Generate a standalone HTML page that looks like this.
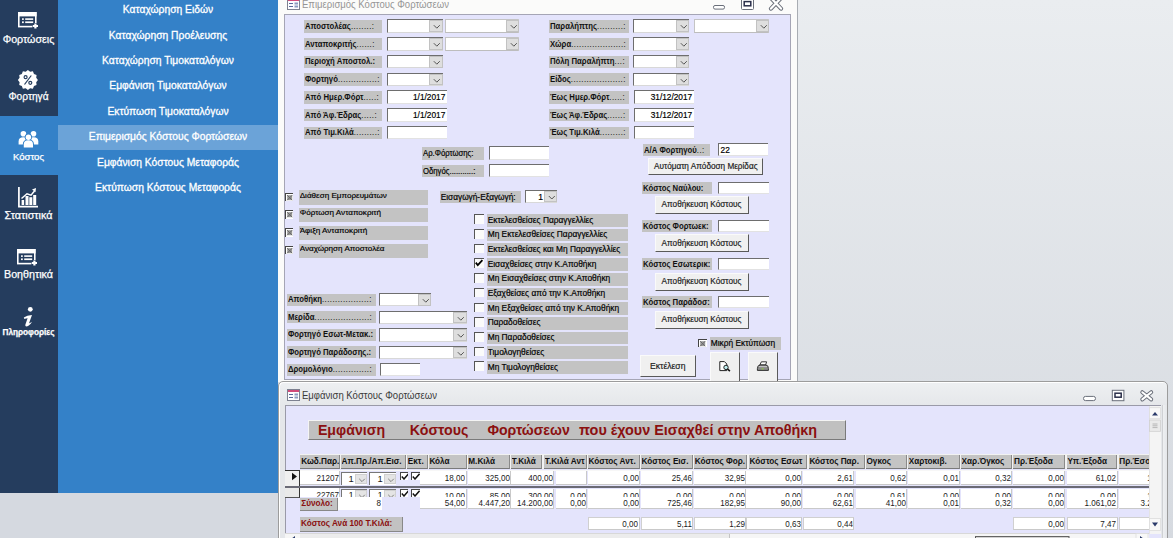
<!DOCTYPE html><html><head><meta charset="utf-8"><style>
*{margin:0;padding:0;box-sizing:border-box}
html,body{width:1173px;height:538px;overflow:hidden}
body{position:relative;font-family:"Liberation Sans",sans-serif;background:linear-gradient(#eaedf0,#d6dae0)}
div{position:absolute;white-space:nowrap;overflow:visible}
svg{position:absolute;left:0;top:0;overflow:visible}
</style></head><body><div style="left:0px;top:0px;width:58px;height:493px;background:#253d5e"></div>
<div style="left:0px;top:116px;width:58px;height:59px;background:#3481c8"></div>
<div style="left:58px;top:0px;width:220px;height:493px;background:#3481c8"></div>
<div style="left:0px;top:493px;width:278px;height:45px;background:#d5d9e0"></div>
<div style="left:58px;top:125px;width:220px;height:25px;background:#6ba3d8"></div>
<div style="top:0.23px;height:20px;font-size:10.3px;line-height:20px;color:#fff;left:58.0px;width:220px;text-align:center;-webkit-text-stroke:0.3px #fff;">Καταχώρηση Ειδών</div>
<div style="top:25.63px;height:20px;font-size:10.3px;line-height:20px;color:#fff;left:58.0px;width:220px;text-align:center;-webkit-text-stroke:0.3px #fff;">Καταχώρηση Προέλευσης</div>
<div style="top:51.03px;height:20px;font-size:10.3px;line-height:20px;color:#fff;left:58.0px;width:220px;text-align:center;-webkit-text-stroke:0.3px #fff;">Καταχώρηση Τιμοκαταλόγων</div>
<div style="top:76.43px;height:20px;font-size:10.3px;line-height:20px;color:#fff;left:58.0px;width:220px;text-align:center;-webkit-text-stroke:0.3px #fff;">Εμφάνιση Τιμοκαταλόγων</div>
<div style="top:101.83px;height:20px;font-size:10.3px;line-height:20px;color:#fff;left:58.0px;width:220px;text-align:center;-webkit-text-stroke:0.3px #fff;">Εκτύπωση Τιμοκαταλόγων</div>
<div style="top:127.23px;height:20px;font-size:10.3px;line-height:20px;color:#fff;left:58.0px;width:220px;text-align:center;-webkit-text-stroke:0.3px #fff;">Επιμερισμός Κόστους Φορτώσεων</div>
<div style="top:152.63px;height:20px;font-size:10.3px;line-height:20px;color:#fff;left:58.0px;width:220px;text-align:center;-webkit-text-stroke:0.3px #fff;">Εμφάνιση Κόστους Μεταφοράς</div>
<div style="top:178.03px;height:20px;font-size:10.3px;line-height:20px;color:#fff;left:58.0px;width:220px;text-align:center;-webkit-text-stroke:0.3px #fff;">Εκτύπωση Κόστους Μεταφοράς</div>
<div style="top:28.89px;height:20px;font-size:10.7px;line-height:20px;color:#fff;left:-0.5px;width:58px;text-align:center;-webkit-text-stroke:0.25px #fff;">Φορτώσεις</div>
<div style="top:87.07px;height:20px;font-size:10.2px;line-height:20px;color:#fff;left:-0.5px;width:58px;text-align:center;-webkit-text-stroke:0.25px #fff;">Φορτηγά</div>
<div style="top:146.67px;height:20px;font-size:9.6px;line-height:20px;color:#fff;left:-0.5px;width:58px;text-align:center;-webkit-text-stroke:0.25px #fff;">Κόστος</div>
<div style="top:204.96px;height:20px;font-size:10.8px;line-height:20px;color:#fff;left:-0.5px;width:58px;text-align:center;-webkit-text-stroke:0.25px #fff;">Στατιστικά</div>
<div style="top:264.09px;height:20px;font-size:10.7px;line-height:20px;color:#fff;left:-0.5px;width:58px;text-align:center;-webkit-text-stroke:0.25px #fff;">Βοηθητικά</div>
<div style="top:323.46px;height:20px;font-size:8.2px;line-height:20px;color:#fff;font-weight:bold;left:-0.5px;width:58px;text-align:center;-webkit-text-stroke:0.25px #fff;">Πληροφορίες</div>
<svg style="left:17.8px;top:12px" width="24" height="20" viewBox="0 0 24 20">
<rect x="0.8" y="0.8" width="17" height="13.8" fill="none" stroke="#fff" stroke-width="1.6"/>
<rect x="0" y="0" width="18.6" height="4.4" fill="#fff"/>
<rect x="4" y="6.3" width="1.8" height="1.6" fill="#fff"/><rect x="7.2" y="6.3" width="8" height="1.6" fill="#fff"/>
<rect x="4" y="9.4" width="1.8" height="1.7" fill="#fff"/><rect x="7.2" y="9.4" width="8" height="1.7" fill="#fff"/>
<path d="M17.4 11 v6 M14.4 14 h6" stroke="#253d5e" stroke-width="4.6"/>
<path d="M17.4 11.4 v5.2 M14.8 14 h5.2" stroke="#fff" stroke-width="2.2"/>
</svg>
<svg style="left:17.4px;top:248.5px" width="24" height="20" viewBox="0 0 24 20">
<rect x="0.8" y="0.8" width="17" height="13.8" fill="none" stroke="#fff" stroke-width="1.6"/>
<rect x="0" y="0" width="18.6" height="4.4" fill="#fff"/>
<rect x="4" y="6.3" width="1.8" height="1.6" fill="#fff"/><rect x="7.2" y="6.3" width="8" height="1.6" fill="#fff"/>
<rect x="4" y="9.4" width="1.8" height="1.7" fill="#fff"/><rect x="7.2" y="9.4" width="8" height="1.7" fill="#fff"/>
<path d="M17.4 11 v6 M14.4 14 h6" stroke="#253d5e" stroke-width="4.6"/>
<path d="M17.4 11.4 v5.2 M14.8 14 h5.2" stroke="#fff" stroke-width="2.2"/>
</svg>
<svg style="left:0;top:0" width="58" height="100"><polygon points="27.90,90.00 30.13,88.31 32.90,88.66 33.98,86.08 36.56,85.00 36.21,82.23 37.90,80.00 36.21,77.77 36.56,75.00 33.98,73.92 32.90,71.34 30.13,71.69 27.90,70.00 25.67,71.69 22.90,71.34 21.82,73.92 19.24,75.00 19.59,77.77 17.90,80.00 19.59,82.23 19.24,85.00 21.82,86.08 22.90,88.66 25.67,88.31" fill="#fff"/>
<circle cx="25.6" cy="77.2" r="1.5" fill="none" stroke="#253d5e" stroke-width="1.2"/>
<circle cx="30.3" cy="82.8" r="1.5" fill="none" stroke="#253d5e" stroke-width="1.2"/>
<path d="M24.5 84.5 L31.3 75.5" stroke="#253d5e" stroke-width="1.2"/></svg>
<svg style="left:0;top:0" width="58" height="160">
<circle cx="23.4" cy="133.8" r="2.8" fill="#fff"/><circle cx="33.5" cy="133.8" r="2.8" fill="#fff"/>
<path d="M18.6 144.6 v-3.2 q0-4.2 4.8-4.2 q4.8 0 4.8 4.2 v3.2z" fill="#fff"/>
<path d="M28.7 144.6 v-3.2 q0-4.2 4.8-4.2 q4.8 0 4.8 4.2 v3.2z" fill="#fff"/>
<circle cx="28.4" cy="137.2" r="3.6" fill="#3481c8"/>
<path d="M22.8 148.4 v-4 q0-5 5.6-5 q5.6 0 5.6 5 v4z" fill="#3481c8"/>
<circle cx="28.4" cy="137.2" r="2.7" fill="#fff"/>
<path d="M23.8 147.6 v-3.4 q0-4 4.6-4 q4.6 0 4.6 4 v3.4z" fill="#fff"/>
</svg>
<svg style="left:0;top:0" width="58" height="220">
<path d="M18.9 187 V206.7 H38" fill="none" stroke="#fff" stroke-width="1.7"/>
<rect x="21.6" y="200" width="2.5" height="5" fill="#fff"/>
<rect x="25.5" y="196" width="3" height="9" fill="#fff"/>
<rect x="29.3" y="197.2" width="3" height="7.8" fill="#fff"/>
<rect x="33.2" y="195" width="3" height="10" fill="#fff"/>
<path d="M21.5 198.5 L27 193.8 L31 195.2 L34.5 191" fill="none" stroke="#fff" stroke-width="1.5"/>
<path d="M32 189.5 L36 188 L35.5 192.3z" fill="#fff"/>
</svg>
<svg style="left:0;top:0" width="58" height="340">
<circle cx="30.3" cy="309.3" r="2.4" fill="#fff"/>
<path d="M23.8 317.6 Q27 315.3 32 315.1 L29.3 322.6 Q29.1 323.5 30 323 L32 321.8 Q29.5 326.2 26.6 326.4 Q24.8 326.4 25.4 324.4 L27.6 318.2 Q26 318.2 24.4 318.9z" fill="#fff"/>
</svg>
<div style="left:278px;top:0px;width:520px;height:381.5px;background:#fbfbfa;border-right:1.4px solid #a9adb3"></div>
<div style="left:284px;top:14px;width:507px;height:366px;background:#e4e4fc;border:1px solid #a5a5b5"></div>
<div style="top:-4.96px;height:20px;font-size:10.0px;line-height:20px;color:#959595;left:301.5px;transform:scaleX(0.955);transform-origin:left;">Επιμερισμός Κόστους Φορτώσεων</div>
<svg style="left:286.5px;top:-2.5px" width="13" height="12">
<rect x="0.5" y="0.5" width="12" height="11" fill="#fdfdff" stroke="#7d8190"/>
<rect x="1" y="1" width="11" height="2" fill="#d04a7a"/>
<path d="M2 5.5 h4 M2 8.5 h4" stroke="#5a6a9a" stroke-width="1.2"/>
<rect x="7.5" y="4.5" width="3.5" height="2" fill="#8a9ac0"/><rect x="7.5" y="7.5" width="3.5" height="2" fill="#8a9ac0"/>
</svg>
<svg style="left:0;top:0" width="800" height="14">
<rect x="713.5" y="5.5" width="11" height="3.6" rx="1.5" fill="#fff" stroke="#6a6f7a" stroke-width="1"/>
<rect x="741.5" y="-2" width="12" height="11.5" rx="1" fill="#fff" stroke="#6a6f7a" stroke-width="1"/>
<rect x="744.2" y="1.6" width="6.6" height="4.2" fill="none" stroke="#2a2f4a" stroke-width="1.5"/>
<path d="M771 -2 L781 8.6 M781 -2 L771 8.6" stroke="#6a6f7a" stroke-width="4.2" stroke-linecap="round"/>
<path d="M771 -2 L781 8.6 M781 -2 L771 8.6" stroke="#fff" stroke-width="2.2" stroke-linecap="round"/>
</svg>
<div style="left:304.3px;top:20.0px;width:77.4px;height:12.6px;background:#c3c3c3"></div>
<div style="top:15.88px;height:20px;font-size:9.0px;line-height:20px;color:#111;font-weight:bold;left:305.3px;transform:scaleX(0.86);transform-origin:left;width:88.3px;overflow:hidden;">Αποστολέας<span style="font-weight:normal;letter-spacing:0.55px">........</span><span style="font-weight:normal">:</span></div>
<div style="left:549px;top:20.0px;width:80px;height:12.6px;background:#c3c3c3"></div>
<div style="top:15.88px;height:20px;font-size:9.0px;line-height:20px;color:#111;font-weight:bold;left:550px;transform:scaleX(0.86);transform-origin:left;width:91.3px;overflow:hidden;">Παραλήπτης<span style="font-weight:normal;letter-spacing:0.55px">..........</span><span style="font-weight:normal">:</span></div>
<div style="left:386.7px;top:19.4px;width:56px;height:13.4px;background:#fff;border-top:1.5px solid #6e6e6e;border-left:1.5px solid #6e6e6e;border-bottom:1px solid #d8d8d8"></div>
<div style="left:429.2px;top:20.4px;width:13.5px;height:11.9px;background:#dedede;border:1px solid #c2c2c2"><svg width="13.5" height="11.9"><path d="M3.8 4.2 l3 3 l3 -3" fill="none" stroke="#555" stroke-width="1"/></svg></div>
<div style="left:633.4px;top:19.4px;width:56px;height:13.4px;background:#fff;border-top:1.5px solid #6e6e6e;border-left:1.5px solid #6e6e6e;border-bottom:1px solid #d8d8d8"></div>
<div style="left:675.9px;top:20.4px;width:13.5px;height:11.9px;background:#dedede;border:1px solid #c2c2c2"><svg width="13.5" height="11.9"><path d="M3.8 4.2 l3 3 l3 -3" fill="none" stroke="#555" stroke-width="1"/></svg></div>
<div style="left:445px;top:19.4px;width:74px;height:13.4px;background:#fff;border-top:1.2px solid #c4c4c4;border-left:1.2px solid #c4c4c4;border-bottom:1.4px solid #bdbdbd;border-right:1px solid #d0d0d0"></div>
<div style="left:505.5px;top:20.4px;width:13.5px;height:11.9px;background:#dedede;border:1px solid #c2c2c2"><svg width="13.5" height="11.9"><path d="M3.8 4.2 l3 3 l3 -3" fill="none" stroke="#555" stroke-width="1"/></svg></div>
<div style="left:304.3px;top:37.9px;width:77.4px;height:12.6px;background:#c3c3c3"></div>
<div style="top:33.78px;height:20px;font-size:9.0px;line-height:20px;color:#111;font-weight:bold;left:305.3px;transform:scaleX(0.86);transform-origin:left;width:88.3px;overflow:hidden;">Ανταποκριτής<span style="font-weight:normal;letter-spacing:0.55px">......</span><span style="font-weight:normal">:</span></div>
<div style="left:549px;top:37.9px;width:80px;height:12.6px;background:#c3c3c3"></div>
<div style="top:33.78px;height:20px;font-size:9.0px;line-height:20px;color:#111;font-weight:bold;left:550px;transform:scaleX(0.86);transform-origin:left;width:91.3px;overflow:hidden;">Χώρα<span style="font-weight:normal;letter-spacing:0.55px">....................</span><span style="font-weight:normal">:</span></div>
<div style="left:386.7px;top:37.3px;width:56px;height:13.4px;background:#fff;border-top:1.5px solid #6e6e6e;border-left:1.5px solid #6e6e6e;border-bottom:1px solid #d8d8d8"></div>
<div style="left:429.2px;top:38.3px;width:13.5px;height:11.9px;background:#dedede;border:1px solid #c2c2c2"><svg width="13.5" height="11.9"><path d="M3.8 4.2 l3 3 l3 -3" fill="none" stroke="#555" stroke-width="1"/></svg></div>
<div style="left:633.4px;top:37.3px;width:56px;height:13.4px;background:#fff;border-top:1.5px solid #6e6e6e;border-left:1.5px solid #6e6e6e;border-bottom:1px solid #d8d8d8"></div>
<div style="left:675.9px;top:38.3px;width:13.5px;height:11.9px;background:#dedede;border:1px solid #c2c2c2"><svg width="13.5" height="11.9"><path d="M3.8 4.2 l3 3 l3 -3" fill="none" stroke="#555" stroke-width="1"/></svg></div>
<div style="left:445px;top:37.3px;width:74px;height:13.4px;background:#fff;border-top:1.2px solid #c4c4c4;border-left:1.2px solid #c4c4c4;border-bottom:1.4px solid #bdbdbd;border-right:1px solid #d0d0d0"></div>
<div style="left:505.5px;top:38.3px;width:13.5px;height:11.9px;background:#dedede;border:1px solid #c2c2c2"><svg width="13.5" height="11.9"><path d="M3.8 4.2 l3 3 l3 -3" fill="none" stroke="#555" stroke-width="1"/></svg></div>
<div style="left:304.3px;top:55.6px;width:77.4px;height:12.6px;background:#c3c3c3"></div>
<div style="top:51.48px;height:20px;font-size:9.0px;line-height:20px;color:#111;font-weight:bold;left:305.3px;transform:scaleX(0.86);transform-origin:left;width:88.3px;overflow:hidden;">Περιοχή Αποστολ.:</div>
<div style="left:549px;top:55.6px;width:80px;height:12.6px;background:#c3c3c3"></div>
<div style="top:51.48px;height:20px;font-size:9.0px;line-height:20px;color:#111;font-weight:bold;left:550px;transform:scaleX(0.86);transform-origin:left;width:91.3px;overflow:hidden;">Πόλη Παραλήπτη<span style="font-weight:normal;letter-spacing:0.55px">...</span><span style="font-weight:normal">:</span></div>
<div style="left:386.7px;top:55.0px;width:56px;height:13.4px;background:#fff;border-top:1.5px solid #6e6e6e;border-left:1.5px solid #6e6e6e;border-bottom:1px solid #d8d8d8"></div>
<div style="left:429.2px;top:56.0px;width:13.5px;height:11.9px;background:#dedede;border:1px solid #c2c2c2"><svg width="13.5" height="11.9"><path d="M3.8 4.2 l3 3 l3 -3" fill="none" stroke="#555" stroke-width="1"/></svg></div>
<div style="left:633.4px;top:55.0px;width:56px;height:13.4px;background:#fff;border-top:1.5px solid #6e6e6e;border-left:1.5px solid #6e6e6e;border-bottom:1px solid #d8d8d8"></div>
<div style="left:675.9px;top:56.0px;width:13.5px;height:11.9px;background:#dedede;border:1px solid #c2c2c2"><svg width="13.5" height="11.9"><path d="M3.8 4.2 l3 3 l3 -3" fill="none" stroke="#555" stroke-width="1"/></svg></div>
<div style="left:304.3px;top:73.19999999999999px;width:77.4px;height:12.6px;background:#c3c3c3"></div>
<div style="top:69.08px;height:20px;font-size:9.0px;line-height:20px;color:#111;font-weight:bold;left:305.3px;transform:scaleX(0.86);transform-origin:left;width:88.3px;overflow:hidden;">Φορτηγό<span style="font-weight:normal;letter-spacing:0.55px">...............</span><span style="font-weight:normal">:</span></div>
<div style="left:549px;top:73.19999999999999px;width:80px;height:12.6px;background:#c3c3c3"></div>
<div style="top:69.08px;height:20px;font-size:9.0px;line-height:20px;color:#111;font-weight:bold;left:550px;transform:scaleX(0.86);transform-origin:left;width:91.3px;overflow:hidden;">Είδος<span style="font-weight:normal;letter-spacing:0.55px">....................</span><span style="font-weight:normal">:</span></div>
<div style="left:386.7px;top:72.6px;width:56px;height:13.4px;background:#fff;border-top:1.5px solid #6e6e6e;border-left:1.5px solid #6e6e6e;border-bottom:1px solid #d8d8d8"></div>
<div style="left:429.2px;top:73.6px;width:13.5px;height:11.9px;background:#dedede;border:1px solid #c2c2c2"><svg width="13.5" height="11.9"><path d="M3.8 4.2 l3 3 l3 -3" fill="none" stroke="#555" stroke-width="1"/></svg></div>
<div style="left:633.4px;top:72.6px;width:56px;height:13.4px;background:#fff;border-top:1.5px solid #6e6e6e;border-left:1.5px solid #6e6e6e;border-bottom:1px solid #d8d8d8"></div>
<div style="left:675.9px;top:73.6px;width:13.5px;height:11.9px;background:#dedede;border:1px solid #c2c2c2"><svg width="13.5" height="11.9"><path d="M3.8 4.2 l3 3 l3 -3" fill="none" stroke="#555" stroke-width="1"/></svg></div>
<div style="left:304.3px;top:91.0px;width:77.4px;height:12.6px;background:#c3c3c3"></div>
<div style="top:86.88px;height:20px;font-size:9.0px;line-height:20px;color:#111;font-weight:bold;left:305.3px;transform:scaleX(0.86);transform-origin:left;width:88.3px;overflow:hidden;">Από Ημερ.Φόρτ<span style="font-weight:normal;letter-spacing:0.55px">.....</span><span style="font-weight:normal">:</span></div>
<div style="left:549px;top:91.0px;width:80px;height:12.6px;background:#c3c3c3"></div>
<div style="top:86.88px;height:20px;font-size:9.0px;line-height:20px;color:#111;font-weight:bold;left:550px;transform:scaleX(0.86);transform-origin:left;width:91.3px;overflow:hidden;">Έως Ημερ.Φόρτ<span style="font-weight:normal;letter-spacing:0.55px">.....</span><span style="font-weight:normal">:</span></div>
<div style="left:386.6px;top:90.4px;width:60px;height:13.4px;background:#fff;border-top:1.5px solid #6e6e6e;border-left:1.5px solid #6e6e6e;border-bottom:1px solid #e2e2e2"></div>
<div style="top:87.02px;height:20px;font-size:8.3px;line-height:20px;color:#000;-webkit-text-stroke:0.18px #000;left:385.3px;width:60px;text-align:right;">1/1/2017</div>
<div style="left:633.5px;top:90.4px;width:60px;height:13.4px;background:#fff;border-top:1.5px solid #6e6e6e;border-left:1.5px solid #6e6e6e;border-bottom:1px solid #e2e2e2"></div>
<div style="top:87.02px;height:20px;font-size:8.3px;line-height:20px;color:#000;-webkit-text-stroke:0.18px #000;left:632.2px;width:60px;text-align:right;">31/12/2017</div>
<div style="left:304.3px;top:108.8px;width:77.4px;height:12.6px;background:#c3c3c3"></div>
<div style="top:104.68px;height:20px;font-size:9.0px;line-height:20px;color:#111;font-weight:bold;left:305.3px;transform:scaleX(0.86);transform-origin:left;width:88.3px;overflow:hidden;">Από Άφ.Έδρας<span style="font-weight:normal;letter-spacing:0.55px">.....</span><span style="font-weight:normal">:</span></div>
<div style="left:549px;top:108.8px;width:80px;height:12.6px;background:#c3c3c3"></div>
<div style="top:104.68px;height:20px;font-size:9.0px;line-height:20px;color:#111;font-weight:bold;left:550px;transform:scaleX(0.86);transform-origin:left;width:91.3px;overflow:hidden;">Έως Άφ.Έδρας<span style="font-weight:normal;letter-spacing:0.55px">......</span><span style="font-weight:normal">:</span></div>
<div style="left:386.6px;top:108.2px;width:60px;height:13.4px;background:#fff;border-top:1.5px solid #6e6e6e;border-left:1.5px solid #6e6e6e;border-bottom:1px solid #e2e2e2"></div>
<div style="top:104.82px;height:20px;font-size:8.3px;line-height:20px;color:#000;-webkit-text-stroke:0.18px #000;left:385.3px;width:60px;text-align:right;">1/1/2017</div>
<div style="left:633.5px;top:108.2px;width:60px;height:13.4px;background:#fff;border-top:1.5px solid #6e6e6e;border-left:1.5px solid #6e6e6e;border-bottom:1px solid #e2e2e2"></div>
<div style="top:104.82px;height:20px;font-size:8.3px;line-height:20px;color:#000;-webkit-text-stroke:0.18px #000;left:632.2px;width:60px;text-align:right;">31/12/2017</div>
<div style="left:304.3px;top:126.6px;width:77.4px;height:12.6px;background:#c3c3c3"></div>
<div style="top:122.48px;height:20px;font-size:9.0px;line-height:20px;color:#111;font-weight:bold;left:305.3px;transform:scaleX(0.86);transform-origin:left;width:88.3px;overflow:hidden;">Από Τιμ.Κιλά<span style="font-weight:normal;letter-spacing:0.55px">.........</span><span style="font-weight:normal">:</span></div>
<div style="left:549px;top:126.6px;width:80px;height:12.6px;background:#c3c3c3"></div>
<div style="top:122.48px;height:20px;font-size:9.0px;line-height:20px;color:#111;font-weight:bold;left:550px;transform:scaleX(0.86);transform-origin:left;width:91.3px;overflow:hidden;">Έως Τιμ.Κιλά<span style="font-weight:normal;letter-spacing:0.55px">.........</span><span style="font-weight:normal">:</span></div>
<div style="left:386.6px;top:126.0px;width:60px;height:13.4px;background:#fff;border-top:1.5px solid #6e6e6e;border-left:1.5px solid #6e6e6e;border-bottom:1px solid #e2e2e2"></div>
<div style="left:633.5px;top:126.0px;width:60px;height:13.4px;background:#fff;border-top:1.5px solid #6e6e6e;border-left:1.5px solid #6e6e6e;border-bottom:1px solid #e2e2e2"></div>
<div style="left:694.3px;top:19.4px;width:75px;height:13.4px;background:#fff;border-top:1.2px solid #c4c4c4;border-left:1.2px solid #c4c4c4;border-bottom:1.4px solid #bdbdbd;border-right:1px solid #d0d0d0"></div>
<div style="left:755.8px;top:20.4px;width:13.5px;height:11.9px;background:#dedede;border:1px solid #c2c2c2"><svg width="13.5" height="11.9"><path d="M3.8 4.2 l3 3 l3 -3" fill="none" stroke="#555" stroke-width="1"/></svg></div>
<div style="left:422px;top:147.1px;width:62px;height:12.5px;background:#c3c3c3"></div>
<div style="top:143.32px;height:20px;font-size:8.6px;line-height:20px;color:#000;-webkit-text-stroke:0.18px #000;left:423px;transform:scaleX(0.9);transform-origin:left;width:67.2px;overflow:hidden;">Αρ.Φόρτωσης:</div>
<div style="left:422px;top:164.7px;width:62px;height:12.3px;background:#c3c3c3"></div>
<div style="top:160.92px;height:20px;font-size:8.6px;line-height:20px;color:#000;-webkit-text-stroke:0.18px #000;left:423px;transform:scaleX(0.9);transform-origin:left;width:67.2px;overflow:hidden;">Οδηγός...........:</div>
<div style="left:489.3px;top:146.3px;width:59.4px;height:13.3px;background:#fff;border-top:1.5px solid #6e6e6e;border-left:1.5px solid #6e6e6e;border-bottom:1px solid #e2e2e2"></div>
<div style="left:489.3px;top:163.8px;width:59.4px;height:13.2px;background:#fff;border-top:1.5px solid #6e6e6e;border-left:1.5px solid #6e6e6e;border-bottom:1px solid #e2e2e2"></div>
<div style="left:642.6px;top:143.9px;width:67.7px;height:11.9px;background:#c3c3c3"></div>
<div style="top:139.98px;height:20px;font-size:9.0px;line-height:20px;color:#111;font-weight:bold;left:643.6px;transform:scaleX(0.86);transform-origin:left;width:77.0px;overflow:hidden;">Α/Α Φορτηγού<span style="font-weight:normal;letter-spacing:0.55px">..</span><span style="font-weight:normal">:</span></div>
<div style="left:718.3px;top:143.4px;width:50px;height:12.4px;background:#fff;border-top:1.5px solid #6e6e6e;border-left:1.5px solid #6e6e6e;border-bottom:1px solid #e2e2e2"></div>
<div style="top:139.72px;height:20px;font-size:8.3px;line-height:20px;color:#000;-webkit-text-stroke:0.18px #000;left:720.5999999999999px;">22</div>
<div style="left:648.2px;top:158.2px;width:115.2px;height:17.3px;background:#f0f0f0;border-right:1.5px solid #5a5a5a;border-bottom:1.5px solid #5a5a5a;border-top:1px solid #fafafa;border-left:1px solid #fafafa"></div>
<div style="top:157.01px;height:20px;font-size:8.2px;line-height:20px;color:#1c1c1c;-webkit-text-stroke:0.18px #1c1c1c;left:648.2px;width:115.2px;text-align:center;">Αυτόματη Απόδοση Μερίδας</div>
<div style="left:642.3px;top:181.8px;width:69.5px;height:12.3px;background:#c3c3c3"></div>
<div style="top:177.88px;height:20px;font-size:9.0px;line-height:20px;color:#111;font-weight:bold;left:643.3px;transform:scaleX(0.86);transform-origin:left;width:79.1px;overflow:hidden;">Κόστος Ναύλου:</div>
<div style="left:718.3px;top:181.5px;width:51px;height:12.7px;background:#fff;border-top:1.5px solid #6e6e6e;border-left:1.5px solid #6e6e6e;border-bottom:1px solid #e2e2e2"></div>
<div style="left:654.5px;top:196.3px;width:94px;height:18px;background:#f0f0f0;border-right:1.5px solid #5a5a5a;border-bottom:1.5px solid #5a5a5a;border-top:1px solid #fafafa;border-left:1px solid #fafafa"></div>
<div style="top:195.46px;height:20px;font-size:8.2px;line-height:20px;color:#1c1c1c;-webkit-text-stroke:0.18px #1c1c1c;left:654.5px;width:94px;text-align:center;">Αποθήκευση Κόστους</div>
<div style="left:642.3px;top:219.9px;width:69.5px;height:12.3px;background:#c3c3c3"></div>
<div style="top:215.98px;height:20px;font-size:9.0px;line-height:20px;color:#111;font-weight:bold;left:643.3px;transform:scaleX(0.86);transform-origin:left;width:79.1px;overflow:hidden;">Κόστος Φορτωεκ:</div>
<div style="left:718.3px;top:219.6px;width:51px;height:12.7px;background:#fff;border-top:1.5px solid #6e6e6e;border-left:1.5px solid #6e6e6e;border-bottom:1px solid #e2e2e2"></div>
<div style="left:654.5px;top:234.4px;width:94px;height:18px;background:#f0f0f0;border-right:1.5px solid #5a5a5a;border-bottom:1.5px solid #5a5a5a;border-top:1px solid #fafafa;border-left:1px solid #fafafa"></div>
<div style="top:233.56px;height:20px;font-size:8.2px;line-height:20px;color:#1c1c1c;-webkit-text-stroke:0.18px #1c1c1c;left:654.5px;width:94px;text-align:center;">Αποθήκευση Κόστους</div>
<div style="left:642.3px;top:258.0px;width:69.5px;height:12.3px;background:#c3c3c3"></div>
<div style="top:254.08px;height:20px;font-size:9.0px;line-height:20px;color:#111;font-weight:bold;left:643.3px;transform:scaleX(0.86);transform-origin:left;width:79.1px;overflow:hidden;">Κόστος Εσωτερικ:</div>
<div style="left:718.3px;top:257.7px;width:51px;height:12.7px;background:#fff;border-top:1.5px solid #6e6e6e;border-left:1.5px solid #6e6e6e;border-bottom:1px solid #e2e2e2"></div>
<div style="left:654.5px;top:272.5px;width:94px;height:18px;background:#f0f0f0;border-right:1.5px solid #5a5a5a;border-bottom:1.5px solid #5a5a5a;border-top:1px solid #fafafa;border-left:1px solid #fafafa"></div>
<div style="top:271.66px;height:20px;font-size:8.2px;line-height:20px;color:#1c1c1c;-webkit-text-stroke:0.18px #1c1c1c;left:654.5px;width:94px;text-align:center;">Αποθήκευση Κόστους</div>
<div style="left:642.3px;top:296.1px;width:69.5px;height:12.3px;background:#c3c3c3"></div>
<div style="top:292.18px;height:20px;font-size:9.0px;line-height:20px;color:#111;font-weight:bold;left:643.3px;transform:scaleX(0.86);transform-origin:left;width:79.1px;overflow:hidden;">Κόστος Παράδοσ:</div>
<div style="left:718.3px;top:295.8px;width:51px;height:12.7px;background:#fff;border-top:1.5px solid #6e6e6e;border-left:1.5px solid #6e6e6e;border-bottom:1px solid #e2e2e2"></div>
<div style="left:654.5px;top:310.6px;width:94px;height:18px;background:#f0f0f0;border-right:1.5px solid #5a5a5a;border-bottom:1.5px solid #5a5a5a;border-top:1px solid #fafafa;border-left:1px solid #fafafa"></div>
<div style="top:309.76px;height:20px;font-size:8.2px;line-height:20px;color:#1c1c1c;-webkit-text-stroke:0.18px #1c1c1c;left:654.5px;width:94px;text-align:center;">Αποθήκευση Κόστους</div>
<div style="left:298.7px;top:190.3px;width:129.4px;height:14.4px;background:#c3c3c3"></div>
<div style="top:185.69px;height:20px;font-size:8.1px;line-height:20px;color:#000;-webkit-text-stroke:0.18px #000;letter-spacing:0px;left:299.7px;width:127.9px;overflow:hidden;">Διάθεση Εμπορευμάτων</div>
<div style="left:284.7px;top:192.60000000000002px;width:8.5px;height:8.5px;background:#fff;border-top:1.2px solid #444;border-left:1.2px solid #444"><svg width="8" height="8"><rect x="1.2" y="1.2" width="5" height="5" fill="#9a9a9a"/><path d="M1.2 1.2 L6.2 6.2 M6.2 1.2 L1.2 6.2" stroke="#6a6a6a" stroke-width="1"/></svg></div>
<div style="left:298.7px;top:208.05px;width:129.4px;height:14.4px;background:#c3c3c3"></div>
<div style="top:203.44px;height:20px;font-size:8.1px;line-height:20px;color:#000;-webkit-text-stroke:0.18px #000;letter-spacing:0px;left:299.7px;width:127.9px;overflow:hidden;">Φόρτωση Ανταποκριτή</div>
<div style="left:284.7px;top:210.35000000000002px;width:8.5px;height:8.5px;background:#fff;border-top:1.2px solid #444;border-left:1.2px solid #444"><svg width="8" height="8"><rect x="1.2" y="1.2" width="5" height="5" fill="#9a9a9a"/><path d="M1.2 1.2 L6.2 6.2 M6.2 1.2 L1.2 6.2" stroke="#6a6a6a" stroke-width="1"/></svg></div>
<div style="left:298.7px;top:225.8px;width:129.4px;height:14.4px;background:#c3c3c3"></div>
<div style="top:221.19px;height:20px;font-size:8.1px;line-height:20px;color:#000;-webkit-text-stroke:0.18px #000;letter-spacing:0px;left:299.7px;width:127.9px;overflow:hidden;">Άφιξη Ανταποκριτή</div>
<div style="left:284.7px;top:228.10000000000002px;width:8.5px;height:8.5px;background:#fff;border-top:1.2px solid #444;border-left:1.2px solid #444"><svg width="8" height="8"><rect x="1.2" y="1.2" width="5" height="5" fill="#9a9a9a"/><path d="M1.2 1.2 L6.2 6.2 M6.2 1.2 L1.2 6.2" stroke="#6a6a6a" stroke-width="1"/></svg></div>
<div style="left:298.7px;top:243.55px;width:129.4px;height:14.4px;background:#c3c3c3"></div>
<div style="top:238.94px;height:20px;font-size:8.1px;line-height:20px;color:#000;-webkit-text-stroke:0.18px #000;letter-spacing:0px;left:299.7px;width:127.9px;overflow:hidden;">Αναχώρηση Αποστολέα</div>
<div style="left:284.7px;top:245.85000000000002px;width:8.5px;height:8.5px;background:#fff;border-top:1.2px solid #444;border-left:1.2px solid #444"><svg width="8" height="8"><rect x="1.2" y="1.2" width="5" height="5" fill="#9a9a9a"/><path d="M1.2 1.2 L6.2 6.2 M6.2 1.2 L1.2 6.2" stroke="#6a6a6a" stroke-width="1"/></svg></div>
<div style="left:439.7px;top:190.8px;width:81px;height:12.4px;background:#c3c3c3"></div>
<div style="top:186.72px;height:20px;font-size:8.3px;line-height:20px;color:#000;-webkit-text-stroke:0.18px #000;letter-spacing:0px;left:440.7px;width:79.5px;overflow:hidden;">Εισαγωγή-Εξαγωγή:</div>
<div style="left:524.8px;top:189.7px;width:32.5px;height:13px;background:#fff;border-top:1.5px solid #6e6e6e;border-left:1.5px solid #6e6e6e;border-bottom:1px solid #d8d8d8"></div>
<div style="left:543.6999999999999px;top:190.7px;width:13.6px;height:11.5px;background:#dedede;border:1px solid #c2c2c2"><svg width="13.6" height="11.5"><path d="M3.8 4.0 l3 3 l3 -3" fill="none" stroke="#555" stroke-width="1"/></svg></div>
<div style="top:186.82px;height:20px;font-size:8.6px;line-height:20px;color:#000;-webkit-text-stroke:0.18px #000;left:533px;width:10px;text-align:right;">1</div>
<div style="left:486.7px;top:214.0px;width:141.5px;height:12.8px;background:#c3c3c3"></div>
<div style="top:209.51px;height:20px;font-size:8.35px;line-height:20px;color:#000;-webkit-text-stroke:0.18px #000;letter-spacing:0px;left:487.7px;width:140.0px;overflow:hidden;">Εκτελεσθείσες Παραγγελλίες</div>
<div style="left:474.2px;top:214.3px;width:9.7px;height:9.7px;background:#fbfbfb;border-top:1.8px solid #555;border-left:1.8px solid #555"></div>
<div style="left:486.7px;top:228.7px;width:141.5px;height:12.8px;background:#c3c3c3"></div>
<div style="top:224.21px;height:20px;font-size:8.35px;line-height:20px;color:#000;-webkit-text-stroke:0.18px #000;letter-spacing:0px;left:487.7px;width:140.0px;overflow:hidden;">Μη Εκτελεσθείσες Παραγγελλίες</div>
<div style="left:474.2px;top:229.0px;width:9.7px;height:9.7px;background:#fbfbfb;border-top:1.8px solid #555;border-left:1.8px solid #555"></div>
<div style="left:486.7px;top:243.4px;width:141.5px;height:12.8px;background:#c3c3c3"></div>
<div style="top:238.91px;height:20px;font-size:8.35px;line-height:20px;color:#000;-webkit-text-stroke:0.18px #000;letter-spacing:0px;left:487.7px;width:140.0px;overflow:hidden;">Εκτελεσθείσες και Μη Παραγγελλίες</div>
<div style="left:474.2px;top:243.70000000000002px;width:9.7px;height:9.7px;background:#fbfbfb;border-top:1.8px solid #555;border-left:1.8px solid #555"></div>
<div style="left:486.7px;top:258.1px;width:141.5px;height:12.8px;background:#c3c3c3"></div>
<div style="top:253.61px;height:20px;font-size:8.35px;line-height:20px;color:#000;-webkit-text-stroke:0.18px #000;letter-spacing:0px;left:487.7px;width:140.0px;overflow:hidden;">Εισαχθείσες στην Κ.Αποθήκη</div>
<div style="left:474.2px;top:258.40000000000003px;width:9.7px;height:9.7px;background:#fbfbfb;border-top:1.8px solid #555;border-left:1.8px solid #555"><svg width="10" height="10"><path d="M0.8 3.6 L2.8 6.2 L7.4 1.2" fill="none" stroke="#000" stroke-width="1.8"/></svg></div>
<div style="left:486.7px;top:272.8px;width:141.5px;height:12.8px;background:#c3c3c3"></div>
<div style="top:268.31px;height:20px;font-size:8.35px;line-height:20px;color:#000;-webkit-text-stroke:0.18px #000;letter-spacing:0px;left:487.7px;width:140.0px;overflow:hidden;">Μη Εισαχθείσες στην Κ.Αποθήκη</div>
<div style="left:474.2px;top:273.1px;width:9.7px;height:9.7px;background:#fbfbfb;border-top:1.8px solid #555;border-left:1.8px solid #555"></div>
<div style="left:486.7px;top:287.5px;width:141.5px;height:12.8px;background:#c3c3c3"></div>
<div style="top:283.01px;height:20px;font-size:8.35px;line-height:20px;color:#000;-webkit-text-stroke:0.18px #000;letter-spacing:0px;left:487.7px;width:140.0px;overflow:hidden;">Εξαχθείσες από την Κ.Αποθήκη</div>
<div style="left:474.2px;top:287.8px;width:9.7px;height:9.7px;background:#fbfbfb;border-top:1.8px solid #555;border-left:1.8px solid #555"></div>
<div style="left:486.7px;top:302.2px;width:141.5px;height:12.8px;background:#c3c3c3"></div>
<div style="top:297.71px;height:20px;font-size:8.35px;line-height:20px;color:#000;-webkit-text-stroke:0.18px #000;letter-spacing:0px;left:487.7px;width:140.0px;overflow:hidden;">Μη Εξαχθείσες από την Κ.Αποθήκη</div>
<div style="left:474.2px;top:302.5px;width:9.7px;height:9.7px;background:#fbfbfb;border-top:1.8px solid #555;border-left:1.8px solid #555"></div>
<div style="left:486.7px;top:316.9px;width:141.5px;height:12.8px;background:#c3c3c3"></div>
<div style="top:312.41px;height:20px;font-size:8.35px;line-height:20px;color:#000;-webkit-text-stroke:0.18px #000;letter-spacing:0px;left:487.7px;width:140.0px;overflow:hidden;">Παραδοθείσες</div>
<div style="left:474.2px;top:317.2px;width:9.7px;height:9.7px;background:#fbfbfb;border-top:1.8px solid #555;border-left:1.8px solid #555"></div>
<div style="left:486.7px;top:331.6px;width:141.5px;height:12.8px;background:#c3c3c3"></div>
<div style="top:327.11px;height:20px;font-size:8.35px;line-height:20px;color:#000;-webkit-text-stroke:0.18px #000;letter-spacing:0px;left:487.7px;width:140.0px;overflow:hidden;">Μη Παραδοθείσες</div>
<div style="left:474.2px;top:331.90000000000003px;width:9.7px;height:9.7px;background:#fbfbfb;border-top:1.8px solid #555;border-left:1.8px solid #555"></div>
<div style="left:486.7px;top:346.29999999999995px;width:141.5px;height:12.8px;background:#c3c3c3"></div>
<div style="top:341.81px;height:20px;font-size:8.35px;line-height:20px;color:#000;-webkit-text-stroke:0.18px #000;letter-spacing:0px;left:487.7px;width:140.0px;overflow:hidden;">Τιμολογηθείσες</div>
<div style="left:474.2px;top:346.59999999999997px;width:9.7px;height:9.7px;background:#fbfbfb;border-top:1.8px solid #555;border-left:1.8px solid #555"></div>
<div style="left:486.7px;top:361.0px;width:141.5px;height:12.8px;background:#c3c3c3"></div>
<div style="top:356.51px;height:20px;font-size:8.35px;line-height:20px;color:#000;-webkit-text-stroke:0.18px #000;letter-spacing:0px;left:487.7px;width:140.0px;overflow:hidden;">Μη Τιμολογηθείσες</div>
<div style="left:474.2px;top:361.3px;width:9.7px;height:9.7px;background:#fbfbfb;border-top:1.8px solid #555;border-left:1.8px solid #555"></div>
<div style="left:287.4px;top:293.5px;width:88.3px;height:12.4px;background:#c3c3c3"></div>
<div style="top:289.18px;height:20px;font-size:9.0px;line-height:20px;color:#111;font-weight:bold;left:288.4px;transform:scaleX(0.86);transform-origin:left;width:100.9px;overflow:hidden;">Αποθήκη<span style="font-weight:normal;letter-spacing:0.55px">..................</span><span style="font-weight:normal">:</span></div>
<div style="left:379.2px;top:293.0px;width:51.8px;height:13.4px;background:#fff;border-top:1.5px solid #6e6e6e;border-left:1.5px solid #6e6e6e;border-bottom:1px solid #d8d8d8"></div>
<div style="left:417.5px;top:294.0px;width:13.5px;height:11.9px;background:#dedede;border:1px solid #c2c2c2"><svg width="13.5" height="11.9"><path d="M3.8 4.2 l3 3 l3 -3" fill="none" stroke="#555" stroke-width="1"/></svg></div>
<div style="left:287.4px;top:311.1px;width:88.3px;height:12.4px;background:#c3c3c3"></div>
<div style="top:306.78px;height:20px;font-size:9.0px;line-height:20px;color:#111;font-weight:bold;left:288.4px;transform:scaleX(0.86);transform-origin:left;width:100.9px;overflow:hidden;">Μερίδα<span style="font-weight:normal;letter-spacing:0.55px">.....................</span><span style="font-weight:normal">:</span></div>
<div style="left:379.2px;top:310.6px;width:87.6px;height:13.4px;background:#fff;border-top:1.5px solid #6e6e6e;border-left:1.5px solid #6e6e6e;border-bottom:1px solid #d8d8d8"></div>
<div style="left:453.29999999999995px;top:311.6px;width:13.5px;height:11.9px;background:#dedede;border:1px solid #c2c2c2"><svg width="13.5" height="11.9"><path d="M3.8 4.2 l3 3 l3 -3" fill="none" stroke="#555" stroke-width="1"/></svg></div>
<div style="left:287.4px;top:328.8px;width:88.3px;height:12.4px;background:#c3c3c3"></div>
<div style="top:324.48px;height:20px;font-size:9.0px;line-height:20px;color:#111;font-weight:bold;left:288.4px;transform:scaleX(0.86);transform-origin:left;width:100.9px;overflow:hidden;">Φορτηγό Εσωτ-Μετακ.:</div>
<div style="left:379.2px;top:328.3px;width:87.6px;height:13.4px;background:#fff;border-top:1.5px solid #6e6e6e;border-left:1.5px solid #6e6e6e;border-bottom:1px solid #d8d8d8"></div>
<div style="left:453.29999999999995px;top:329.3px;width:13.5px;height:11.9px;background:#dedede;border:1px solid #c2c2c2"><svg width="13.5" height="11.9"><path d="M3.8 4.2 l3 3 l3 -3" fill="none" stroke="#555" stroke-width="1"/></svg></div>
<div style="left:287.4px;top:346px;width:88.3px;height:12.4px;background:#c3c3c3"></div>
<div style="top:341.68px;height:20px;font-size:9.0px;line-height:20px;color:#111;font-weight:bold;left:288.4px;transform:scaleX(0.86);transform-origin:left;width:100.9px;overflow:hidden;">Φορτηγό Παράδοσης.:</div>
<div style="left:379.2px;top:345.5px;width:87.6px;height:13.4px;background:#fff;border-top:1.5px solid #6e6e6e;border-left:1.5px solid #6e6e6e;border-bottom:1px solid #d8d8d8"></div>
<div style="left:453.29999999999995px;top:346.5px;width:13.5px;height:11.9px;background:#dedede;border:1px solid #c2c2c2"><svg width="13.5" height="11.9"><path d="M3.8 4.2 l3 3 l3 -3" fill="none" stroke="#555" stroke-width="1"/></svg></div>
<div style="left:287.4px;top:363.6px;width:88.3px;height:12.4px;background:#c3c3c3"></div>
<div style="top:359.28px;height:20px;font-size:9.0px;line-height:20px;color:#111;font-weight:bold;left:288.4px;transform:scaleX(0.86);transform-origin:left;width:100.9px;overflow:hidden;">Δρομολόγιο<span style="font-weight:normal;letter-spacing:0.55px">..............</span><span style="font-weight:normal">:</span></div>
<div style="left:380.3px;top:363.1px;width:40px;height:13px;background:#fff;border-top:1.5px solid #6e6e6e;border-left:1.5px solid #6e6e6e;border-bottom:1px solid #e2e2e2"></div>
<div style="left:698px;top:338.8px;width:8.5px;height:8.5px;background:#fff;border-top:1.2px solid #444;border-left:1.2px solid #444"><svg width="8" height="8"><rect x="1.2" y="1.2" width="5" height="5" fill="#9a9a9a"/><path d="M1.2 1.2 L6.2 6.2 M6.2 1.2 L1.2 6.2" stroke="#6a6a6a" stroke-width="1"/></svg></div>
<div style="left:709.8px;top:337.3px;width:71.2px;height:12.4px;background:#c3c3c3"></div>
<div style="top:333.21px;height:20px;font-size:8.35px;line-height:20px;color:#000;-webkit-text-stroke:0.18px #000;letter-spacing:0px;left:710.8px;width:69.7px;overflow:hidden;">Μικρή Εκτύπωση</div>
<div style="left:639.7px;top:354.5px;width:56px;height:22px;background:#f0f0f0;border-right:1.5px solid #5a5a5a;border-bottom:1.5px solid #5a5a5a;border-top:1px solid #fafafa;border-left:1px solid #fafafa"></div>
<div style="top:356.02px;height:20px;font-size:8.6px;line-height:20px;color:#1c1c1c;-webkit-text-stroke:0.18px #1c1c1c;left:639.7px;width:56px;text-align:center;">Εκτέλεση</div>
<div style="left:710px;top:351.6px;width:30.4px;height:30px;background:#f0f0f0;border-right:1.5px solid #5a5a5a;border-bottom:1.5px solid #5a5a5a;border-top:1px solid #fafafa;border-left:1px solid #fafafa"></div>
<div style="left:748.3px;top:351.6px;width:30.2px;height:30px;background:#f0f0f0;border-right:1.5px solid #5a5a5a;border-bottom:1.5px solid #5a5a5a;border-top:1px solid #fafafa;border-left:1px solid #fafafa"></div>
<svg style="left:0;top:0" width="800" height="400">
<path d="M719.8 361.6 h4.6 l2.4 2.4 v6.6 h-7z" fill="#fff" stroke="#222" stroke-width="1"/>
<circle cx="726" cy="367.4" r="2.2" fill="#bfeef0" stroke="#222" stroke-width="1"/>
<path d="M727.5 369 l2.4 2.2" stroke="#111" stroke-width="1.6"/>
<path d="M759.8 365 l1.6-3.2 h5.2 l-1 3.2z" fill="#fff" stroke="#222" stroke-width="0.9"/>
<path d="M757.4 368.6 q0-3.6 3-3.6 h5.4 q2.6 0 2.6 3.6 v1.8 h-11z" fill="#8c8c8c" stroke="#222" stroke-width="0.9"/>
<path d="M758.6 366.6 h8.6" stroke="#d8d8d8" stroke-width="0.8"/>
<rect x="761.5" y="368.4" width="2.2" height="1" fill="#8fd040"/>
</svg>
<div style="left:278.3px;top:381.3px;width:889.5px;height:170px;background:linear-gradient(#eef0f2,#e5e7ea 24px);border:1px solid #9c9c9c;border-radius:5px 5px 0 0;box-shadow:inset 1px 1px 0 #fff"></div>
<svg style="left:287px;top:389px" width="13" height="12">
<rect x="0.5" y="0.5" width="12" height="11" fill="#fdfdff" stroke="#7d8190"/>
<rect x="1" y="1" width="11" height="2" fill="#d04a7a"/>
<path d="M2 5.5 h4 M2 8.5 h4" stroke="#5a6a9a" stroke-width="1.2"/>
<rect x="7.5" y="4.5" width="3.5" height="2" fill="#8a9ac0"/><rect x="7.5" y="7.5" width="3.5" height="2" fill="#8a9ac0"/>
</svg>
<div style="top:386.44px;height:20px;font-size:10.0px;line-height:20px;color:#3a3a3a;left:302.2px;transform:scaleX(0.955);transform-origin:left;">Εμφάνιση Κόστους Φορτώσεων</div>
<svg style="left:0;top:0" width="1173" height="410">
<rect x="1083.5" y="396.4" width="12" height="4.2" rx="2" fill="#fff" stroke="#6a6f7a" stroke-width="1"/>
<rect x="1112.3" y="390.3" width="11.6" height="10.4" fill="#fff" stroke="#6a6f7a" stroke-width="1"/>
<rect x="1115" y="393.2" width="6.2" height="4" fill="none" stroke="#2a2f4a" stroke-width="1.5"/>
<path d="M1142.3 392.2 L1151.2 399.4 M1151.2 392.2 L1142.3 399.4" stroke="#6a6f7a" stroke-width="4" stroke-linecap="round"/>
<path d="M1142.3 392.2 L1151.2 399.4 M1151.2 392.2 L1142.3 399.4" stroke="#fff" stroke-width="2" stroke-linecap="round"/>
</svg>
<div style="left:284.5px;top:404.8px;width:876.8px;height:140px;background:#e4e4fc;border-top:1px solid #9a9aa8;border-left:1px solid #9a9aa8"></div>
<div style="left:284.5px;top:405.3px;width:864.2px;height:127.5px;overflow:hidden"><div style="left:-284.5px;top:-405.3px;width:1173px;height:538px">
<div style="left:308.4px;top:419.8px;width:537.6px;height:20.6px;background:#c0c0c0;border-top:1px solid #f4f4f4;border-left:1px solid #f4f4f4;border-right:1.5px solid #7a7a7a;border-bottom:1.5px solid #7a7a7a"></div>
<div style="top:419.98px;height:20px;font-size:14.2px;line-height:20px;color:#8b1010;font-weight:bold;left:317.9px;">Εμφάνιση</div>
<div style="top:419.98px;height:20px;font-size:14.2px;line-height:20px;color:#8b1010;font-weight:bold;left:409.8px;">Κόστους</div>
<div style="top:420.01px;height:20px;font-size:14.1px;line-height:20px;color:#8b1010;font-weight:bold;left:487.4px;">Φορτώσεων</div>
<div style="top:419.91px;height:20px;font-size:14.4px;line-height:20px;color:#8b1010;font-weight:bold;left:579px;">που έχουν Εισαχθεί στην Αποθήκη</div>
<div style="left:300px;top:454.4px;width:848.7px;height:15px;background:#f2f2f2"></div>
<div style="left:300.4px;top:455.2px;width:39.5px;height:13.6px;background:#c4c4c4;border-right:1px solid #8a8a8a;border-bottom:1.3px solid #7a7a7a;overflow:hidden"></div>
<div style="top:452.36px;height:20px;font-size:8.2px;line-height:20px;color:#111;font-weight:bold;left:301.2px;width:39.3px;overflow:hidden;">Κωδ.Παρ.</div>
<div style="left:340.8px;top:455.2px;width:65.19999999999999px;height:13.6px;background:#c4c4c4;border-right:1px solid #8a8a8a;border-bottom:1.3px solid #7a7a7a;overflow:hidden"></div>
<div style="top:452.36px;height:20px;font-size:8.2px;line-height:20px;color:#111;font-weight:bold;left:341.6px;width:64.99999999999999px;overflow:hidden;">Απ.Πρ./Απ.Εισ.</div>
<div style="left:407px;top:455.2px;width:21.30000000000001px;height:13.6px;background:#c4c4c4;border-right:1px solid #8a8a8a;border-bottom:1.3px solid #7a7a7a;overflow:hidden"></div>
<div style="top:452.36px;height:20px;font-size:8.2px;line-height:20px;color:#111;font-weight:bold;left:407.8px;width:21.100000000000012px;overflow:hidden;">Εκτ.</div>
<div style="left:428.6px;top:455.2px;width:38.599999999999966px;height:13.6px;background:#c4c4c4;border-right:1px solid #8a8a8a;border-bottom:1.3px solid #7a7a7a;overflow:hidden"></div>
<div style="top:452.36px;height:20px;font-size:8.2px;line-height:20px;color:#111;font-weight:bold;left:429.40000000000003px;width:38.39999999999996px;overflow:hidden;">Κόλα</div>
<div style="left:467.5px;top:455.2px;width:42.69999999999999px;height:13.6px;background:#c4c4c4;border-right:1px solid #8a8a8a;border-bottom:1.3px solid #7a7a7a;overflow:hidden"></div>
<div style="top:452.36px;height:20px;font-size:8.2px;line-height:20px;color:#111;font-weight:bold;left:468.3px;width:42.499999999999986px;overflow:hidden;">Μ.Κιλά</div>
<div style="left:511px;top:455.2px;width:31.399999999999977px;height:13.6px;background:#c4c4c4;border-right:1px solid #8a8a8a;border-bottom:1.3px solid #7a7a7a;overflow:hidden"></div>
<div style="top:452.36px;height:20px;font-size:8.2px;line-height:20px;color:#111;font-weight:bold;left:511.8px;width:31.199999999999978px;overflow:hidden;">Τ.Κιλά</div>
<div style="left:544px;top:455.2px;width:42.60000000000002px;height:13.6px;background:#c4c4c4;border-right:1px solid #8a8a8a;border-bottom:1.3px solid #7a7a7a;overflow:hidden"></div>
<div style="top:452.36px;height:20px;font-size:8.2px;line-height:20px;color:#111;font-weight:bold;left:544.8px;width:42.40000000000002px;overflow:hidden;">Τ.Κιλά Αντ</div>
<div style="left:587.8px;top:455.2px;width:51.80000000000007px;height:13.6px;background:#c4c4c4;border-right:1px solid #8a8a8a;border-bottom:1.3px solid #7a7a7a;overflow:hidden"></div>
<div style="top:452.36px;height:20px;font-size:8.2px;line-height:20px;color:#111;font-weight:bold;left:588.5999999999999px;width:51.600000000000065px;overflow:hidden;">Κόστος Αντ.</div>
<div style="left:640.8px;top:455.2px;width:52.40000000000009px;height:13.6px;background:#c4c4c4;border-right:1px solid #8a8a8a;border-bottom:1.3px solid #7a7a7a;overflow:hidden"></div>
<div style="top:452.36px;height:20px;font-size:8.2px;line-height:20px;color:#111;font-weight:bold;left:641.5999999999999px;width:52.20000000000009px;overflow:hidden;">Κόστος Εισ.</div>
<div style="left:694px;top:455.2px;width:53.39999999999998px;height:13.6px;background:#c4c4c4;border-right:1px solid #8a8a8a;border-bottom:1.3px solid #7a7a7a;overflow:hidden"></div>
<div style="top:452.36px;height:20px;font-size:8.2px;line-height:20px;color:#111;font-weight:bold;left:694.8px;width:53.199999999999974px;overflow:hidden;">Κόστος Φορ.</div>
<div style="left:748.8px;top:455.2px;width:58.60000000000002px;height:13.6px;background:#c4c4c4;border-right:1px solid #8a8a8a;border-bottom:1.3px solid #7a7a7a;overflow:hidden"></div>
<div style="top:452.36px;height:20px;font-size:8.2px;line-height:20px;color:#111;font-weight:bold;left:749.5999999999999px;width:58.40000000000002px;overflow:hidden;">Κόστος Εσωτ</div>
<div style="left:808.6px;top:455.2px;width:56.39999999999998px;height:13.6px;background:#c4c4c4;border-right:1px solid #8a8a8a;border-bottom:1.3px solid #7a7a7a;overflow:hidden"></div>
<div style="top:452.36px;height:20px;font-size:8.2px;line-height:20px;color:#111;font-weight:bold;left:809.4px;width:56.199999999999974px;overflow:hidden;">Κόστος Παρ.</div>
<div style="left:865.7px;top:455.2px;width:41.09999999999991px;height:13.6px;background:#c4c4c4;border-right:1px solid #8a8a8a;border-bottom:1.3px solid #7a7a7a;overflow:hidden"></div>
<div style="top:452.36px;height:20px;font-size:8.2px;line-height:20px;color:#111;font-weight:bold;left:866.5px;width:40.899999999999906px;overflow:hidden;">Ογκος</div>
<div style="left:908px;top:455.2px;width:51.799999999999955px;height:13.6px;background:#c4c4c4;border-right:1px solid #8a8a8a;border-bottom:1.3px solid #7a7a7a;overflow:hidden"></div>
<div style="top:452.36px;height:20px;font-size:8.2px;line-height:20px;color:#111;font-weight:bold;left:908.8px;width:51.59999999999995px;overflow:hidden;">Χαρτοκιβ.</div>
<div style="left:960.8px;top:455.2px;width:51.60000000000002px;height:13.6px;background:#c4c4c4;border-right:1px solid #8a8a8a;border-bottom:1.3px solid #7a7a7a;overflow:hidden"></div>
<div style="top:452.36px;height:20px;font-size:8.2px;line-height:20px;color:#111;font-weight:bold;left:961.5999999999999px;width:51.40000000000002px;overflow:hidden;">Χαρ.Όγκος</div>
<div style="left:1013.2px;top:455.2px;width:52.0px;height:13.6px;background:#c4c4c4;border-right:1px solid #8a8a8a;border-bottom:1.3px solid #7a7a7a;overflow:hidden"></div>
<div style="top:452.36px;height:20px;font-size:8.2px;line-height:20px;color:#111;font-weight:bold;left:1014.0px;width:51.8px;overflow:hidden;">Πρ.Έξοδα</div>
<div style="left:1066.6px;top:455.2px;width:50.600000000000136px;height:13.6px;background:#c4c4c4;border-right:1px solid #8a8a8a;border-bottom:1.3px solid #7a7a7a;overflow:hidden"></div>
<div style="top:452.36px;height:20px;font-size:8.2px;line-height:20px;color:#111;font-weight:bold;left:1067.3999999999999px;width:50.400000000000134px;overflow:hidden;">Υπ.Έξοδα</div>
<div style="left:1118.5px;top:455.2px;width:56.5px;height:13.6px;background:#c4c4c4;border-right:1px solid #8a8a8a;border-bottom:1.3px solid #7a7a7a;overflow:hidden"></div>
<div style="top:452.36px;height:20px;font-size:8.2px;line-height:20px;color:#111;font-weight:bold;left:1119.3px;width:56.3px;overflow:hidden;">Πρ.Έσοδα</div>
<div style="left:285.3px;top:469.6px;width:14.8px;height:17.2px;background:#f0f0f0;border-top:1.2px solid #333;border-right:1.2px solid #333"></div>
<svg style="left:0;top:0" width="400" height="500"><path d="M292 472.8 L297 476.5 L292 480.2z" fill="#111"/></svg>
<div style="left:285.3px;top:487.5px;width:14.8px;height:10.2px;background:#e9e9e9;border-right:1.2px solid #333;border-bottom:1.2px solid #555"></div>
<div style="left:300px;top:469.8px;width:848.7px;height:1.5px;background:#f7f7f7"></div>
<div style="left:285.3px;top:486.4px;width:863.4px;height:1.3px;background:#6a6a76"></div>
<div style="left:300.4px;top:471.2px;width:39.5px;height:13.800000000000011px;background:#fff;border-right:1.2px solid #c9c9c9;border-bottom:1.2px solid #c9c9c9"></div>
<div style="left:300.4px;top:471.6px;width:38.8px;height:13.399999999999977px;overflow:hidden"><div style="left:-61.6px;top:-3.46px;width:100px;height:20px;line-height:20px;font-size:9.4px;color:#1a1a1a;text-align:right;transform:scaleX(0.86);transform-origin:right">21207</div></div>
<div style="left:419.5px;top:471.2px;width:47.0px;height:13.800000000000011px;background:#fff;border-right:1.2px solid #c9c9c9;border-bottom:1.2px solid #c9c9c9"></div>
<div style="left:419.5px;top:471.6px;width:46.3px;height:13.399999999999977px;overflow:hidden"><div style="left:-54.1px;top:-3.46px;width:100px;height:20px;line-height:20px;font-size:9.4px;color:#1a1a1a;text-align:right;transform:scaleX(0.86);transform-origin:right">18,00</div></div>
<div style="left:467.5px;top:471.2px;width:43.10000000000002px;height:13.800000000000011px;background:#fff;border-right:1.2px solid #c9c9c9;border-bottom:1.2px solid #c9c9c9"></div>
<div style="left:467.5px;top:471.6px;width:42.40000000000002px;height:13.399999999999977px;overflow:hidden"><div style="left:-57.99999999999998px;top:-3.46px;width:100px;height:20px;line-height:20px;font-size:9.4px;color:#1a1a1a;text-align:right;transform:scaleX(0.86);transform-origin:right">325,00</div></div>
<div style="left:511.3px;top:471.2px;width:42.900000000000034px;height:13.800000000000011px;background:#fff;border-right:1.2px solid #c9c9c9;border-bottom:1.2px solid #c9c9c9"></div>
<div style="left:511.3px;top:471.6px;width:42.20000000000003px;height:13.399999999999977px;overflow:hidden"><div style="left:-58.19999999999997px;top:-3.46px;width:100px;height:20px;line-height:20px;font-size:9.4px;color:#1a1a1a;text-align:right;transform:scaleX(0.86);transform-origin:right">400,00</div></div>
<div style="left:555.5px;top:471.2px;width:31.200000000000045px;height:13.800000000000011px;background:#fff;border-right:1.2px solid #c9c9c9;border-bottom:1.2px solid #c9c9c9"></div>
<div style="left:587.7px;top:471.2px;width:52.0px;height:13.800000000000011px;background:#fff;border-right:1.2px solid #c9c9c9;border-bottom:1.2px solid #c9c9c9"></div>
<div style="left:587.7px;top:471.6px;width:51.3px;height:13.399999999999977px;overflow:hidden"><div style="left:-49.1px;top:-3.46px;width:100px;height:20px;line-height:20px;font-size:9.4px;color:#1a1a1a;text-align:right;transform:scaleX(0.86);transform-origin:right">0,00</div></div>
<div style="left:640.7px;top:471.2px;width:52.59999999999991px;height:13.800000000000011px;background:#fff;border-right:1.2px solid #c9c9c9;border-bottom:1.2px solid #c9c9c9"></div>
<div style="left:640.7px;top:471.6px;width:51.899999999999906px;height:13.399999999999977px;overflow:hidden"><div style="left:-48.50000000000009px;top:-3.46px;width:100px;height:20px;line-height:20px;font-size:9.4px;color:#1a1a1a;text-align:right;transform:scaleX(0.86);transform-origin:right">25,46</div></div>
<div style="left:694.1px;top:471.2px;width:51.69999999999993px;height:13.800000000000011px;background:#fff;border-right:1.2px solid #c9c9c9;border-bottom:1.2px solid #c9c9c9"></div>
<div style="left:694.1px;top:471.6px;width:50.99999999999993px;height:13.399999999999977px;overflow:hidden"><div style="left:-49.40000000000007px;top:-3.46px;width:100px;height:20px;line-height:20px;font-size:9.4px;color:#1a1a1a;text-align:right;transform:scaleX(0.86);transform-origin:right">32,95</div></div>
<div style="left:746.4px;top:471.2px;width:55.60000000000002px;height:13.800000000000011px;background:#fff;border-right:1.2px solid #c9c9c9;border-bottom:1.2px solid #c9c9c9"></div>
<div style="left:746.4px;top:471.6px;width:54.90000000000002px;height:13.399999999999977px;overflow:hidden"><div style="left:-45.49999999999998px;top:-3.46px;width:100px;height:20px;line-height:20px;font-size:9.4px;color:#1a1a1a;text-align:right;transform:scaleX(0.86);transform-origin:right">0,00</div></div>
<div style="left:803.1px;top:471.2px;width:51.39999999999998px;height:13.800000000000011px;background:#fff;border-right:1.2px solid #c9c9c9;border-bottom:1.2px solid #c9c9c9"></div>
<div style="left:803.1px;top:471.6px;width:50.699999999999974px;height:13.399999999999977px;overflow:hidden"><div style="left:-49.700000000000024px;top:-3.46px;width:100px;height:20px;line-height:20px;font-size:9.4px;color:#1a1a1a;text-align:right;transform:scaleX(0.86);transform-origin:right">2,61</div></div>
<div style="left:855.5px;top:471.2px;width:51.299999999999955px;height:13.800000000000011px;background:#fff;border-right:1.2px solid #c9c9c9;border-bottom:1.2px solid #c9c9c9"></div>
<div style="left:855.5px;top:471.6px;width:50.59999999999995px;height:13.399999999999977px;overflow:hidden"><div style="left:-49.80000000000005px;top:-3.46px;width:100px;height:20px;line-height:20px;font-size:9.4px;color:#1a1a1a;text-align:right;transform:scaleX(0.86);transform-origin:right">0,62</div></div>
<div style="left:907.6px;top:471.2px;width:52.10000000000002px;height:13.800000000000011px;background:#fff;border-right:1.2px solid #c9c9c9;border-bottom:1.2px solid #c9c9c9"></div>
<div style="left:907.6px;top:471.6px;width:51.40000000000002px;height:13.399999999999977px;overflow:hidden"><div style="left:-48.99999999999998px;top:-3.46px;width:100px;height:20px;line-height:20px;font-size:9.4px;color:#1a1a1a;text-align:right;transform:scaleX(0.86);transform-origin:right">0,01</div></div>
<div style="left:961px;top:471.2px;width:51.299999999999955px;height:13.800000000000011px;background:#fff;border-right:1.2px solid #c9c9c9;border-bottom:1.2px solid #c9c9c9"></div>
<div style="left:961px;top:471.6px;width:50.59999999999995px;height:13.399999999999977px;overflow:hidden"><div style="left:-49.80000000000005px;top:-3.46px;width:100px;height:20px;line-height:20px;font-size:9.4px;color:#1a1a1a;text-align:right;transform:scaleX(0.86);transform-origin:right">0,32</div></div>
<div style="left:1013.4px;top:471.2px;width:51.89999999999998px;height:13.800000000000011px;background:#fff;border-right:1.2px solid #c9c9c9;border-bottom:1.2px solid #c9c9c9"></div>
<div style="left:1013.4px;top:471.6px;width:51.199999999999974px;height:13.399999999999977px;overflow:hidden"><div style="left:-49.200000000000024px;top:-3.46px;width:100px;height:20px;line-height:20px;font-size:9.4px;color:#1a1a1a;text-align:right;transform:scaleX(0.86);transform-origin:right">0,00</div></div>
<div style="left:1066.5px;top:471.2px;width:51.0px;height:13.800000000000011px;background:#fff;border-right:1.2px solid #c9c9c9;border-bottom:1.2px solid #c9c9c9"></div>
<div style="left:1066.5px;top:471.6px;width:50.3px;height:13.399999999999977px;overflow:hidden"><div style="left:-50.1px;top:-3.46px;width:100px;height:20px;line-height:20px;font-size:9.4px;color:#1a1a1a;text-align:right;transform:scaleX(0.86);transform-origin:right">61,02</div></div>
<div style="left:1118.9px;top:471.2px;width:54.09999999999991px;height:13.800000000000011px;background:#fff;border-right:1.2px solid #c9c9c9;border-bottom:1.2px solid #c9c9c9"></div>
<div style="left:1118.9px;top:471.6px;width:53.399999999999906px;height:13.399999999999977px;overflow:hidden"><div style="left:-47.00000000000009px;top:-3.46px;width:100px;height:20px;line-height:20px;font-size:9.4px;color:#1a1a1a;text-align:right;transform:scaleX(0.86);transform-origin:right">120,00</div></div>
<div style="left:419.5px;top:489px;width:47.0px;height:20px;background:#fff;border-right:1.2px solid #c9c9c9;border-bottom:1.2px solid #c9c9c9"></div>
<div style="left:419.5px;top:489px;width:46.3px;height:8px;overflow:hidden"><div style="left:-54.1px;top:-3.26px;width:100px;height:20px;line-height:20px;font-size:9.4px;color:#1a1a1a;text-align:right;transform:scaleX(0.86);transform-origin:right">10,00</div></div>
<div style="left:419.5px;top:497px;width:46.3px;height:12px;overflow:hidden"><div style="left:-54.1px;top:-4.36px;width:100px;height:20px;line-height:20px;font-size:9.4px;color:#1a1a1a;text-align:right;transform:scaleX(0.86);transform-origin:right">54,00</div></div>
<div style="left:467.5px;top:489px;width:43.10000000000002px;height:20px;background:#fff;border-right:1.2px solid #c9c9c9;border-bottom:1.2px solid #c9c9c9"></div>
<div style="left:467.5px;top:489px;width:42.40000000000002px;height:8px;overflow:hidden"><div style="left:-57.99999999999998px;top:-3.26px;width:100px;height:20px;line-height:20px;font-size:9.4px;color:#1a1a1a;text-align:right;transform:scaleX(0.86);transform-origin:right">85,00</div></div>
<div style="left:467.5px;top:497px;width:42.40000000000002px;height:12px;overflow:hidden"><div style="left:-57.99999999999998px;top:-4.36px;width:100px;height:20px;line-height:20px;font-size:9.4px;color:#1a1a1a;text-align:right;transform:scaleX(0.86);transform-origin:right">4.447,20</div></div>
<div style="left:511.3px;top:489px;width:42.900000000000034px;height:20px;background:#fff;border-right:1.2px solid #c9c9c9;border-bottom:1.2px solid #c9c9c9"></div>
<div style="left:511.3px;top:489px;width:42.20000000000003px;height:8px;overflow:hidden"><div style="left:-58.19999999999997px;top:-3.26px;width:100px;height:20px;line-height:20px;font-size:9.4px;color:#1a1a1a;text-align:right;transform:scaleX(0.86);transform-origin:right">300,00</div></div>
<div style="left:511.3px;top:497px;width:42.20000000000003px;height:12px;overflow:hidden"><div style="left:-58.19999999999997px;top:-4.36px;width:100px;height:20px;line-height:20px;font-size:9.4px;color:#1a1a1a;text-align:right;transform:scaleX(0.86);transform-origin:right">14.200,00</div></div>
<div style="left:555.5px;top:489px;width:31.200000000000045px;height:20px;background:#fff;border-right:1.2px solid #c9c9c9;border-bottom:1.2px solid #c9c9c9"></div>
<div style="left:555.5px;top:489px;width:30.500000000000046px;height:8px;overflow:hidden"><div style="left:-69.89999999999995px;top:-3.26px;width:100px;height:20px;line-height:20px;font-size:9.4px;color:#1a1a1a;text-align:right;transform:scaleX(0.86);transform-origin:right">0,00</div></div>
<div style="left:555.5px;top:497px;width:30.500000000000046px;height:12px;overflow:hidden"><div style="left:-69.89999999999995px;top:-4.36px;width:100px;height:20px;line-height:20px;font-size:9.4px;color:#1a1a1a;text-align:right;transform:scaleX(0.86);transform-origin:right">0,00</div></div>
<div style="left:587.7px;top:489px;width:52.0px;height:20px;background:#fff;border-right:1.2px solid #c9c9c9;border-bottom:1.2px solid #c9c9c9"></div>
<div style="left:587.7px;top:489px;width:51.3px;height:8px;overflow:hidden"><div style="left:-49.1px;top:-3.26px;width:100px;height:20px;line-height:20px;font-size:9.4px;color:#1a1a1a;text-align:right;transform:scaleX(0.86);transform-origin:right">0,00</div></div>
<div style="left:587.7px;top:497px;width:51.3px;height:12px;overflow:hidden"><div style="left:-49.1px;top:-4.36px;width:100px;height:20px;line-height:20px;font-size:9.4px;color:#1a1a1a;text-align:right;transform:scaleX(0.86);transform-origin:right">0,00</div></div>
<div style="left:640.7px;top:489px;width:52.59999999999991px;height:20px;background:#fff;border-right:1.2px solid #c9c9c9;border-bottom:1.2px solid #c9c9c9"></div>
<div style="left:640.7px;top:489px;width:51.899999999999906px;height:8px;overflow:hidden"><div style="left:-48.50000000000009px;top:-3.26px;width:100px;height:20px;line-height:20px;font-size:9.4px;color:#1a1a1a;text-align:right;transform:scaleX(0.86);transform-origin:right">0,00</div></div>
<div style="left:640.7px;top:497px;width:51.899999999999906px;height:12px;overflow:hidden"><div style="left:-48.50000000000009px;top:-4.36px;width:100px;height:20px;line-height:20px;font-size:9.4px;color:#1a1a1a;text-align:right;transform:scaleX(0.86);transform-origin:right">725,46</div></div>
<div style="left:694.1px;top:489px;width:51.69999999999993px;height:20px;background:#fff;border-right:1.2px solid #c9c9c9;border-bottom:1.2px solid #c9c9c9"></div>
<div style="left:694.1px;top:489px;width:50.99999999999993px;height:8px;overflow:hidden"><div style="left:-49.40000000000007px;top:-3.26px;width:100px;height:20px;line-height:20px;font-size:9.4px;color:#1a1a1a;text-align:right;transform:scaleX(0.86);transform-origin:right">0,00</div></div>
<div style="left:694.1px;top:497px;width:50.99999999999993px;height:12px;overflow:hidden"><div style="left:-49.40000000000007px;top:-4.36px;width:100px;height:20px;line-height:20px;font-size:9.4px;color:#1a1a1a;text-align:right;transform:scaleX(0.86);transform-origin:right">182,95</div></div>
<div style="left:746.4px;top:489px;width:55.60000000000002px;height:20px;background:#fff;border-right:1.2px solid #c9c9c9;border-bottom:1.2px solid #c9c9c9"></div>
<div style="left:746.4px;top:489px;width:54.90000000000002px;height:8px;overflow:hidden"><div style="left:-45.49999999999998px;top:-3.26px;width:100px;height:20px;line-height:20px;font-size:9.4px;color:#1a1a1a;text-align:right;transform:scaleX(0.86);transform-origin:right">0,00</div></div>
<div style="left:746.4px;top:497px;width:54.90000000000002px;height:12px;overflow:hidden"><div style="left:-45.49999999999998px;top:-4.36px;width:100px;height:20px;line-height:20px;font-size:9.4px;color:#1a1a1a;text-align:right;transform:scaleX(0.86);transform-origin:right">90,00</div></div>
<div style="left:803.1px;top:489px;width:51.39999999999998px;height:20px;background:#fff;border-right:1.2px solid #c9c9c9;border-bottom:1.2px solid #c9c9c9"></div>
<div style="left:803.1px;top:489px;width:50.699999999999974px;height:8px;overflow:hidden"><div style="left:-49.700000000000024px;top:-3.26px;width:100px;height:20px;line-height:20px;font-size:9.4px;color:#1a1a1a;text-align:right;transform:scaleX(0.86);transform-origin:right">0,00</div></div>
<div style="left:803.1px;top:497px;width:50.699999999999974px;height:12px;overflow:hidden"><div style="left:-49.700000000000024px;top:-4.36px;width:100px;height:20px;line-height:20px;font-size:9.4px;color:#1a1a1a;text-align:right;transform:scaleX(0.86);transform-origin:right">62,61</div></div>
<div style="left:855.5px;top:489px;width:51.299999999999955px;height:20px;background:#fff;border-right:1.2px solid #c9c9c9;border-bottom:1.2px solid #c9c9c9"></div>
<div style="left:855.5px;top:489px;width:50.59999999999995px;height:8px;overflow:hidden"><div style="left:-49.80000000000005px;top:-3.26px;width:100px;height:20px;line-height:20px;font-size:9.4px;color:#1a1a1a;text-align:right;transform:scaleX(0.86);transform-origin:right">0,61</div></div>
<div style="left:855.5px;top:497px;width:50.59999999999995px;height:12px;overflow:hidden"><div style="left:-49.80000000000005px;top:-4.36px;width:100px;height:20px;line-height:20px;font-size:9.4px;color:#1a1a1a;text-align:right;transform:scaleX(0.86);transform-origin:right">41,00</div></div>
<div style="left:907.6px;top:489px;width:52.10000000000002px;height:20px;background:#fff;border-right:1.2px solid #c9c9c9;border-bottom:1.2px solid #c9c9c9"></div>
<div style="left:907.6px;top:489px;width:51.40000000000002px;height:8px;overflow:hidden"><div style="left:-48.99999999999998px;top:-3.26px;width:100px;height:20px;line-height:20px;font-size:9.4px;color:#1a1a1a;text-align:right;transform:scaleX(0.86);transform-origin:right">0,00</div></div>
<div style="left:907.6px;top:497px;width:51.40000000000002px;height:12px;overflow:hidden"><div style="left:-48.99999999999998px;top:-4.36px;width:100px;height:20px;line-height:20px;font-size:9.4px;color:#1a1a1a;text-align:right;transform:scaleX(0.86);transform-origin:right">0,01</div></div>
<div style="left:961px;top:489px;width:51.299999999999955px;height:20px;background:#fff;border-right:1.2px solid #c9c9c9;border-bottom:1.2px solid #c9c9c9"></div>
<div style="left:961px;top:489px;width:50.59999999999995px;height:8px;overflow:hidden"><div style="left:-49.80000000000005px;top:-3.26px;width:100px;height:20px;line-height:20px;font-size:9.4px;color:#1a1a1a;text-align:right;transform:scaleX(0.86);transform-origin:right">0,00</div></div>
<div style="left:961px;top:497px;width:50.59999999999995px;height:12px;overflow:hidden"><div style="left:-49.80000000000005px;top:-4.36px;width:100px;height:20px;line-height:20px;font-size:9.4px;color:#1a1a1a;text-align:right;transform:scaleX(0.86);transform-origin:right">0,32</div></div>
<div style="left:1013.4px;top:489px;width:51.89999999999998px;height:20px;background:#fff;border-right:1.2px solid #c9c9c9;border-bottom:1.2px solid #c9c9c9"></div>
<div style="left:1013.4px;top:489px;width:51.199999999999974px;height:8px;overflow:hidden"><div style="left:-49.200000000000024px;top:-3.26px;width:100px;height:20px;line-height:20px;font-size:9.4px;color:#1a1a1a;text-align:right;transform:scaleX(0.86);transform-origin:right">0,00</div></div>
<div style="left:1013.4px;top:497px;width:51.199999999999974px;height:12px;overflow:hidden"><div style="left:-49.200000000000024px;top:-4.36px;width:100px;height:20px;line-height:20px;font-size:9.4px;color:#1a1a1a;text-align:right;transform:scaleX(0.86);transform-origin:right">0,00</div></div>
<div style="left:1066.5px;top:489px;width:51.0px;height:20px;background:#fff;border-right:1.2px solid #c9c9c9;border-bottom:1.2px solid #c9c9c9"></div>
<div style="left:1066.5px;top:489px;width:50.3px;height:8px;overflow:hidden"><div style="left:-50.1px;top:-3.26px;width:100px;height:20px;line-height:20px;font-size:9.4px;color:#1a1a1a;text-align:right;transform:scaleX(0.86);transform-origin:right">0,00</div></div>
<div style="left:1066.5px;top:497px;width:50.3px;height:12px;overflow:hidden"><div style="left:-50.1px;top:-4.36px;width:100px;height:20px;line-height:20px;font-size:9.4px;color:#1a1a1a;text-align:right;transform:scaleX(0.86);transform-origin:right">1.061,02</div></div>
<div style="left:1118.9px;top:489px;width:54.09999999999991px;height:20px;background:#fff;border-right:1.2px solid #c9c9c9;border-bottom:1.2px solid #c9c9c9"></div>
<div style="left:1118.9px;top:489px;width:53.399999999999906px;height:8px;overflow:hidden"><div style="left:-47.00000000000009px;top:-3.26px;width:100px;height:20px;line-height:20px;font-size:9.4px;color:#1a1a1a;text-align:right;transform:scaleX(0.86);transform-origin:right">120,00</div></div>
<div style="left:1118.9px;top:497px;width:53.399999999999906px;height:12px;overflow:hidden"><div style="left:-47.00000000000009px;top:-4.36px;width:100px;height:20px;line-height:20px;font-size:9.4px;color:#1a1a1a;text-align:right;transform:scaleX(0.86);transform-origin:right">3.240,00</div></div>
<div style="left:300.4px;top:488px;width:39.5px;height:9px;background:#fff;border-right:1.2px solid #c9c9c9"></div>
<div style="left:300.4px;top:488px;width:38.8px;height:9px;overflow:hidden"><div style="left:-61.6px;top:-2.96px;width:100px;height:20px;line-height:20px;font-size:9.4px;color:#1a1a1a;text-align:right;transform:scaleX(0.86);transform-origin:right">22767</div></div>
<div style="left:341px;top:472px;width:26.3px;height:12.6px;overflow:hidden"><div style="left:0;top:0;width:26.3px;height:12.6px;background:#fff;border-top:1.2px solid #777;border-left:1.2px solid #777"></div><div style="left:13.8px;top:1.5px;width:12px;height:10.6px;background:#e4e4e4;border:1px solid #d0d0d0"><svg width="12" height="10.6"><path d="M3.2 3.8 l2.8 2.8 l2.8 -2.8" fill="none" stroke="#777" stroke-width="0.9"/></svg></div><div style="left:2.8000000000000007px;top:-3.46px;width:10px;height:20px;line-height:20px;font-size:9.4px;color:#1a1a1a;text-align:right">1</div></div>
<div style="left:368.8px;top:472px;width:27.5px;height:12.6px;overflow:hidden"><div style="left:0;top:0;width:27.5px;height:12.6px;background:#fff;border-top:1.2px solid #777;border-left:1.2px solid #777"></div><div style="left:15.0px;top:1.5px;width:12px;height:10.6px;background:#e4e4e4;border:1px solid #d0d0d0"><svg width="12" height="10.6"><path d="M3.2 3.8 l2.8 2.8 l2.8 -2.8" fill="none" stroke="#777" stroke-width="0.9"/></svg></div><div style="left:4.0px;top:-3.46px;width:10px;height:20px;line-height:20px;font-size:9.4px;color:#1a1a1a;text-align:right">1</div></div>
<div style="left:399.7px;top:472px;width:8.4px;height:8.4px;background:#fff;border-top:1.3px solid #444;border-left:1.3px solid #444;overflow:hidden"><svg width="9" height="9"><path d="M0.8 3.6 L3 6 L7.6 0.8" fill="none" stroke="#111" stroke-width="1.5"/></svg></div>
<div style="left:411.2px;top:472px;width:8.4px;height:8.4px;background:#fff;border-top:1.3px solid #444;border-left:1.3px solid #444;overflow:hidden"><svg width="9" height="9"><path d="M0.8 3.6 L3 6 L7.6 0.8" fill="none" stroke="#111" stroke-width="1.5"/></svg></div>
<div style="left:341px;top:488.8px;width:26.3px;height:8.2px;overflow:hidden"><div style="left:0;top:0;width:26.3px;height:12.6px;background:#fff;border-top:1.2px solid #777;border-left:1.2px solid #777"></div><div style="left:13.8px;top:1.5px;width:12px;height:10.6px;background:#e4e4e4;border:1px solid #d0d0d0"><svg width="12" height="10.6"><path d="M3.2 3.8 l2.8 2.8 l2.8 -2.8" fill="none" stroke="#777" stroke-width="0.9"/></svg></div><div style="left:2.8000000000000007px;top:-3.46px;width:10px;height:20px;line-height:20px;font-size:9.4px;color:#1a1a1a;text-align:right">1</div></div>
<div style="left:368.8px;top:488.8px;width:27.5px;height:8.2px;overflow:hidden"><div style="left:0;top:0;width:27.5px;height:12.6px;background:#fff;border-top:1.2px solid #777;border-left:1.2px solid #777"></div><div style="left:15.0px;top:1.5px;width:12px;height:10.6px;background:#e4e4e4;border:1px solid #d0d0d0"><svg width="12" height="10.6"><path d="M3.2 3.8 l2.8 2.8 l2.8 -2.8" fill="none" stroke="#777" stroke-width="0.9"/></svg></div><div style="left:4.0px;top:-3.46px;width:10px;height:20px;line-height:20px;font-size:9.4px;color:#1a1a1a;text-align:right">1</div></div>
<div style="left:399.7px;top:488.8px;width:8.4px;height:8.2px;background:#fff;border-top:1.3px solid #444;border-left:1.3px solid #444;overflow:hidden"><svg width="9" height="9"><path d="M0.8 3.6 L3 6 L7.6 0.8" fill="none" stroke="#111" stroke-width="1.5"/></svg></div>
<div style="left:411.2px;top:488.8px;width:8.4px;height:8.2px;background:#fff;border-top:1.3px solid #444;border-left:1.3px solid #444;overflow:hidden"><svg width="9" height="9"><path d="M0.8 3.6 L3 6 L7.6 0.8" fill="none" stroke="#111" stroke-width="1.5"/></svg></div>
<div style="left:300.4px;top:497.6px;width:37.4px;height:13.8px;background:#c2c2c2;border-right:1.3px solid #888;border-bottom:1.3px solid #888"></div>
<div style="top:493.56px;height:20px;font-size:8.2px;line-height:20px;color:#8b1010;font-weight:bold;left:301.3px;">Σύνολο:</div>
<div style="left:337.8px;top:497px;width:44.5px;height:13px;background:#fff"></div>
<div style="top:492.94px;height:20px;font-size:9.4px;line-height:20px;color:#1a1a1a;left:361.4px;width:20px;text-align:right;transform:scaleX(0.86);transform-origin:right;">8</div>
<div style="left:300.4px;top:517.2px;width:102.2px;height:14.6px;background:#c2c2c2;border-right:1.3px solid #888;border-bottom:1.3px solid #888"></div>
<div style="top:513.76px;height:20px;font-size:8.2px;line-height:20px;color:#8b1010;font-weight:bold;left:301px;">Κόστος Ανά 100 Τ.Κιλά:</div>
<div style="left:587.7px;top:517px;width:52.0px;height:12.6px;background:#fff;border-top:1px solid #d0d0d0;border-left:1px solid #d0d0d0;border-right:1.2px solid #c9c9c9;border-bottom:1.2px solid #c9c9c9"></div>
<div style="top:513.74px;height:20px;font-size:9.4px;line-height:20px;color:#1a1a1a;left:578.4000000000001px;width:60px;text-align:right;transform:scaleX(0.86);transform-origin:right;">0,00</div>
<div style="left:640.7px;top:517px;width:52.59999999999991px;height:12.6px;background:#fff;border-top:1px solid #d0d0d0;border-left:1px solid #d0d0d0;border-right:1.2px solid #c9c9c9;border-bottom:1.2px solid #c9c9c9"></div>
<div style="top:513.74px;height:20px;font-size:9.4px;line-height:20px;color:#1a1a1a;left:632.0px;width:60px;text-align:right;transform:scaleX(0.86);transform-origin:right;">5,11</div>
<div style="left:694.1px;top:517px;width:51.69999999999993px;height:12.6px;background:#fff;border-top:1px solid #d0d0d0;border-left:1px solid #d0d0d0;border-right:1.2px solid #c9c9c9;border-bottom:1.2px solid #c9c9c9"></div>
<div style="top:513.74px;height:20px;font-size:9.4px;line-height:20px;color:#1a1a1a;left:684.5px;width:60px;text-align:right;transform:scaleX(0.86);transform-origin:right;">1,29</div>
<div style="left:746.4px;top:517px;width:55.60000000000002px;height:12.6px;background:#fff;border-top:1px solid #d0d0d0;border-left:1px solid #d0d0d0;border-right:1.2px solid #c9c9c9;border-bottom:1.2px solid #c9c9c9"></div>
<div style="top:513.74px;height:20px;font-size:9.4px;line-height:20px;color:#1a1a1a;left:740.7px;width:60px;text-align:right;transform:scaleX(0.86);transform-origin:right;">0,63</div>
<div style="left:803.1px;top:517px;width:51.39999999999998px;height:12.6px;background:#fff;border-top:1px solid #d0d0d0;border-left:1px solid #d0d0d0;border-right:1.2px solid #c9c9c9;border-bottom:1.2px solid #c9c9c9"></div>
<div style="top:513.74px;height:20px;font-size:9.4px;line-height:20px;color:#1a1a1a;left:793.2px;width:60px;text-align:right;transform:scaleX(0.86);transform-origin:right;">0,44</div>
<div style="left:1013.4px;top:517px;width:51.89999999999998px;height:12.6px;background:#fff;border-top:1px solid #d0d0d0;border-left:1px solid #d0d0d0;border-right:1.2px solid #c9c9c9;border-bottom:1.2px solid #c9c9c9"></div>
<div style="top:513.74px;height:20px;font-size:9.4px;line-height:20px;color:#1a1a1a;left:1004.0px;width:60px;text-align:right;transform:scaleX(0.86);transform-origin:right;">0,00</div>
<div style="left:1066.5px;top:517px;width:51.0px;height:12.6px;background:#fff;border-top:1px solid #d0d0d0;border-left:1px solid #d0d0d0;border-right:1.2px solid #c9c9c9;border-bottom:1.2px solid #c9c9c9"></div>
<div style="top:513.74px;height:20px;font-size:9.4px;line-height:20px;color:#1a1a1a;left:1056.2px;width:60px;text-align:right;transform:scaleX(0.86);transform-origin:right;">7,47</div>
<div style="left:1118.9px;top:517px;width:54.09999999999991px;height:12.6px;background:#fff;border-top:1px solid #d0d0d0;border-left:1px solid #d0d0d0;border-right:1.2px solid #c9c9c9;border-bottom:1.2px solid #c9c9c9"></div>
</div></div>
<div style="left:1148.7px;top:405.5px;width:12.8px;height:128px;background:#f4f4f4;border-left:1px solid #e4e4e4"></div>
<svg style="left:0;top:0" width="1173" height="538">
<rect x="1149.5" y="407.7" width="11" height="11" fill="#f8f8f8" stroke="#dcdcdc" stroke-width="0.8"/>
<path d="M1152 415.6 L1155 412 L1158 415.6z" fill="#2a3a6a"/>
<rect x="1149.5" y="420" width="11" height="11.3" fill="#eaeaea" stroke="#cfcfcf" stroke-width="0.8"/>
<path d="M1152.5 424 h5 M1152.5 425.8 h5 M1152.5 427.6 h5" stroke="#aaa" stroke-width="0.8"/>
<rect x="1149.5" y="518.6" width="11" height="12" fill="#f8f8f8" stroke="#dcdcdc" stroke-width="0.8"/>
<path d="M1152 522.6 L1155 526.4 L1158 522.6z" fill="#2a3a6a"/>
</svg>
<div style="left:1161.5px;top:405px;width:6px;height:140px;background:linear-gradient(90deg,#eef0f2,#e5e7ea);border-left:1px solid #cfd1d4;border-right:1px solid #9c9c9c"></div>
<div style="left:284.5px;top:532.8px;width:864.2px;height:8px;background:#f6f6f6;border-top:1px solid #d8d8d8"></div>
<div style="left:300px;top:533.6px;width:429.5px;height:8px;background:#ececec;border-right:1.2px solid #c4c4c4"></div>
<svg style="left:0;top:0" width="1173" height="538">
<path d="M295 536 L291 539 L295 542z" fill="#2a3a6a"/>
<rect x="975.5" y="536.6" width="93.5" height="5" fill="#e0e0e0" stroke="#555" stroke-width="1"/>
<rect x="1136" y="533.5" width="12" height="8" fill="#f8f8f8" stroke="#dcdcdc" stroke-width="0.8"/>
<path d="M1140 536 L1144 539 L1140 542z" fill="#2a3a6a"/>
</svg></body></html>
